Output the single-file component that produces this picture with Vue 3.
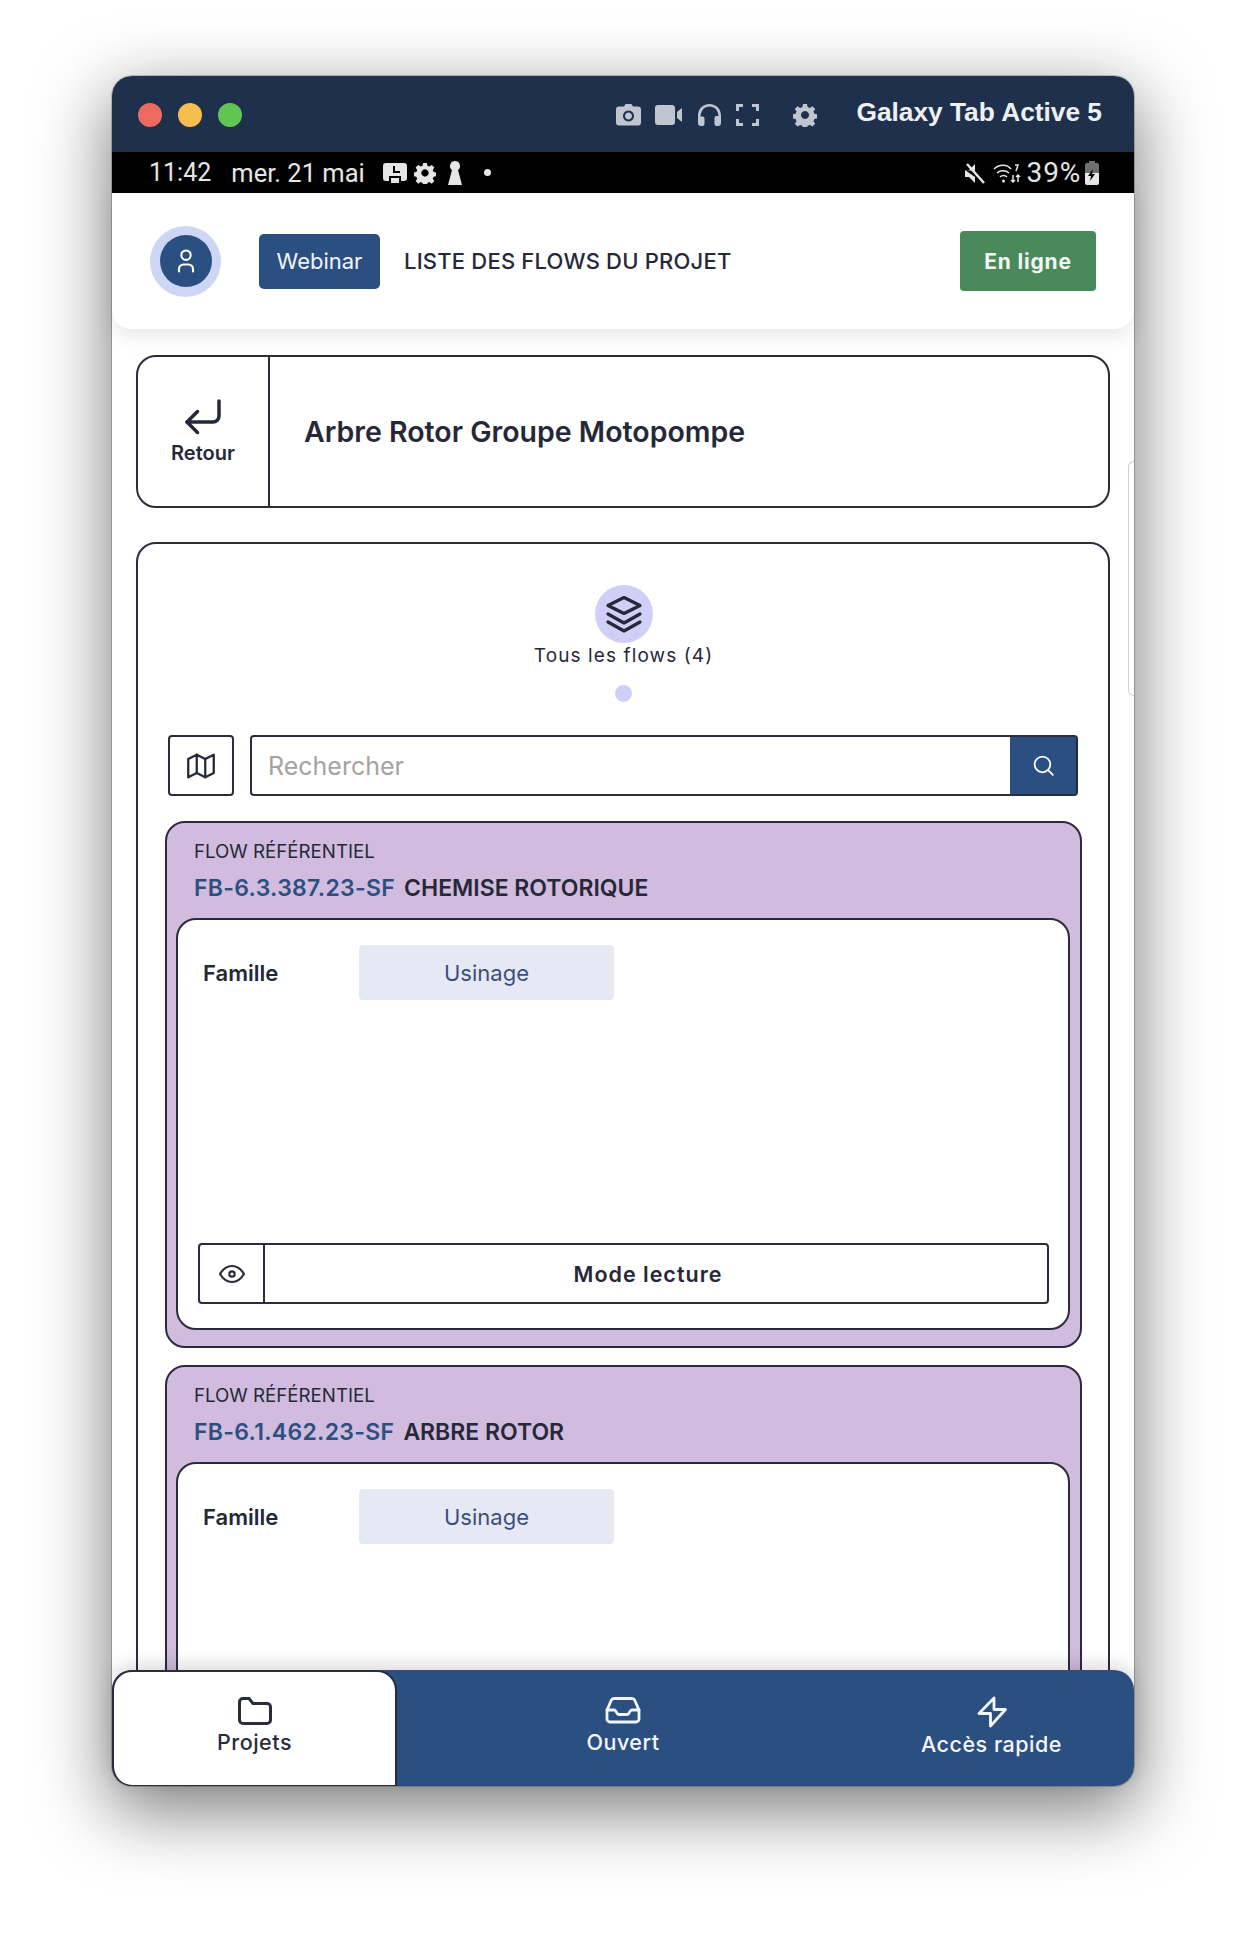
<template>
  <div class="page">
    <div class="window">
      <!-- barre de la fenêtre -->
      <div class="titlebar">
        <div class="lights">
          <span class="light red"></span>
          <span class="light yellow"></span>
          <span class="light green"></span>
        </div>
        <div class="tools">
          <svg class="tool" width="25" height="24" viewBox="0 0 25 24"><path fill-rule="evenodd" d="M8 3.500l1.500-2.500h6l1.500 2.500h5a3 3 0 0 1 3 3v13a3 3 0 0 1-3 3h-19a3 3 0 0 1-3-3v-13a3 3 0 0 1 3-3zM12.500 7.500a5.500 5.500 0 1 0 .001 0zM12.500 9.500a3.500 3.500 0 1 1-.001 0z" /></svg>
          <svg class="tool" width="28" height="22" viewBox="0 0 28 22"><rect x="0" y="1" width="20" height="20" rx="3" /><path d="M22 8l5-4v14l-5-4z" /></svg>
          <svg class="tool" width="25" height="24" viewBox="0 0 25 24"><path d="M12.500 1C5.800 1 1 6 1 12.500V20a3 3 0 0 0 3 3h1.500a2 2 0 0 0 2-2v-5.500a2 2 0 0 0-2-2H3.500C4 7 7.500 3.500 12.500 3.500S21 7 21.500 13h-2a2 2 0 0 0-2 2V21a2 2 0 0 0 2 2H21a3 3 0 0 0 3-3v-7.500C24 6 19.200 1 12.500 1z" /></svg>
          <svg class="tool-line" width="23" height="22" viewBox="0 0 23 22"><path d="M1.500 7V1.500H7M16 1.500h5.500V7M21.500 15v5.500H16M7 20.500H1.500V15" /></svg>
          <svg class="tool gear" width="24" height="24" viewBox="0 0 24 24"><path :d="gearPath" fill-rule="evenodd" /></svg>
        </div>
        <span class="device">Galaxy Tab Active 5</span>
      </div>

      <!-- barre d'état Android -->
      <div class="statusbar">
        <span class="st-time">11:42</span>
        <span class="st-date">mer. 21 mai</span>
        <svg class="st-ico st-first" width="24" height="22" viewBox="0 0 24 22"><path fill-rule="evenodd" d="M3 1h18a3 3 0 0 1 3 3v12a3 3 0 0 1-3 3h-3v-5H6v5H3a3 3 0 0 1-3-3V4a3 3 0 0 1 3-3zM10 4v7h7V9h-5V4zM8 16h8v5H8z" /></svg>
        <svg class="st-ico" width="22" height="22" viewBox="0 0 24 24"><path :d="gearPath" fill-rule="evenodd" /></svg>
        <svg class="st-ico st-key" width="14" height="24" viewBox="0 0 14 24"><path d="M7 0a5 5 0 0 1 3 9l4 15H0L4 9a5 5 0 0 1 3-9z" /></svg>
        <span class="st-dot"></span>
        <span class="st-spacer"></span>
        <svg class="st-ico" width="22" height="22" viewBox="0 0 22 22"><path d="M1 8h4l6-6v7zM1 8v7h4l6 6v-6z" /><path d="M3 2l17 19" stroke="#e6e6e6" stroke-width="2.500" /></svg>
        <svg class="st-wifi" width="28" height="22" viewBox="0 0 28 22"><path d="M1 7c5-5 13-5 17 0M4 11c3-3 9-3 12 0M7 15c2-2 5-2 7 0" /><circle cx="10.500" cy="19" r="1.500" fill="#e6e6e6" stroke="none" /><path d="M20 13v7M18 18l2 2 2-2M25 20v-7M23 15l2-2 2 2M22 3h3l-2 6" /></svg>
        <span class="st-pct">39%</span>
        <svg class="st-batt" width="14" height="24" viewBox="0 0 14 24"><path d="M4 0h6v2h2a2 2 0 0 1 2 2v8H0V4a2 2 0 0 1 2-2h2z" fill="#6f6f6f" /><path d="M0 12h14v10a2 2 0 0 1-2 2H2a2 2 0 0 1-2-2z" fill="#e6e6e6" /><path d="M8 8l-5 7h3l-1 5 5-7H7z" fill="#000" /></svg>
      </div>

      <!-- entête de l'app -->
      <header class="app-header">
        <div class="avatar">
          <div class="avatar-in">
            <svg width="28" height="28" viewBox="0 0 24 24" fill="none" stroke="#fff" stroke-width="1.800" stroke-linecap="round" stroke-linejoin="round"><path d="M8 7a4 4 0 1 0 8 0a4 4 0 0 0 -8 0" /><path d="M6 21v-2a4 4 0 0 1 4 -4h4a4 4 0 0 1 4 4v2" /></svg>
          </div>
        </div>
        <button class="webinar">Webinar</button>
        <span class="page-title">LISTE DES FLOWS DU PROJET</span>
        <button class="online">En ligne</button>
      </header>

      <main class="content">
        <section class="back-card">
          <div class="back-btn">
            <svg width="38" height="36" viewBox="0 0 38 36" fill="none" stroke="#262838" stroke-width="3.500" stroke-linecap="round" stroke-linejoin="round"><path d="M35 2v15a6 6 0 0 1-6 6H3" /><path d="M13.500 12.500L3 23l10.500 10.500" /></svg>
            <span>Retour</span>
          </div>
          <h1 class="project">Arbre Rotor Groupe Motopompe</h1>
        </section>

        <section class="main-card">
          <div class="tab-head">
            <div class="tab-ico">
              <svg width="40" height="38" viewBox="0 0 40 38" fill="none" stroke="#262838" stroke-width="3.200" stroke-linecap="round" stroke-linejoin="round"><path d="M20 2.500L36 10.500L20 18.500L4 10.500z" /><path d="M4 19l16 9l16-9" /><path d="M4 27l16 9l16-9" /></svg>
            </div>
            <span class="tab-label">Tous les flows (4)</span>
            <span class="tab-dot"></span>
          </div>

          <div class="search-row">
            <button class="map-btn">
              <svg width="34" height="34" viewBox="0 0 24 24" fill="none" stroke="#262838" stroke-width="1.600" stroke-linecap="round" stroke-linejoin="round"><path d="M3 7l6 -3l6 3l6 -3v13l-6 3l-6 -3l-6 3v-13" /><path d="M9 4v13" /><path d="M15 7v13" /></svg>
            </button>
            <div class="search">
              <span class="placeholder">Rechercher</span>
              <button class="search-btn">
                <svg width="25" height="25" viewBox="0 0 24 24" fill="none" stroke="#fff" stroke-width="1.700" stroke-linecap="round" stroke-linejoin="round"><path d="M3.500 11a7.500 7.500 0 1 0 15 0a7.500 7.500 0 0 0 -15 0" /><path d="M21 21l-4.600 -4.600" /></svg>
              </button>
            </div>
          </div>

          <article v-for="flow in flows" :key="flow.code" class="flow">
            <div class="flow-type">FLOW RÉFÉRENTIEL</div>
            <div class="flow-name"><span class="flow-code">{{ flow.code }}</span><span>{{ flow.name }}</span></div>
            <div class="flow-body">
              <div class="flow-row">
                <span class="row-label">Famille</span>
                <span class="chip">{{ flow.family }}</span>
              </div>
              <div class="read-mode">
                <span class="read-ico">
                  <svg width="32" height="32" viewBox="0 0 24 24" fill="none" stroke="#262838" stroke-width="1.600" stroke-linecap="round" stroke-linejoin="round"><path d="M10 12a2 2 0 1 0 4 0a2 2 0 0 0 -4 0" /><path d="M21 12c-2.400 4 -5.400 6 -9 6c-3.600 0 -6.600 -2 -9 -6c2.400 -4 5.400 -6 9 -6c3.600 0 6.600 2 9 6" /></svg>
                </span>
                <span class="read-txt">Mode lecture</span>
              </div>
            </div>
          </article>
        </section>

        <div class="scroll-edge"></div>
      </main>

      <nav class="bottom-nav">
        <a class="nav-item active">
          <svg width="36" height="30" viewBox="0 0 36 30" fill="none" stroke="currentColor" stroke-width="3" stroke-linecap="round" stroke-linejoin="round"><path d="M6 2.500h6l4 5h14a3.500 3.500 0 0 1 3.500 3.500v13a3.500 3.500 0 0 1-3.500 3.500H6A3.500 3.500 0 0 1 2.500 24V6A3.500 3.500 0 0 1 6 2.500z" /></svg>
          <span>Projets</span>
        </a>
        <a class="nav-item">
          <svg width="36" height="30" viewBox="0 0 36 30" fill="none" stroke="currentColor" stroke-width="2.800" stroke-linecap="round" stroke-linejoin="round"><path d="M9 2.500h18a3 3 0 0 1 2.700 1.700L34 14v9a3 3 0 0 1-3 3H5a3 3 0 0 1-3-3v-9l4.300-9.800A3 3 0 0 1 9 2.500z" /><path d="M2 14h7a2 2 0 0 1 1.700 1l1.600 2.500a2 2 0 0 0 1.700 1h8a2 2 0 0 0 1.700-1l1.600-2.500a2 2 0 0 1 1.700-1h7" /></svg>
          <span>Ouvert</span>
        </a>
        <a class="nav-item">
          <svg width="30" height="32" viewBox="0 0 30 32" fill="none" stroke="currentColor" stroke-width="2.800" stroke-linecap="round" stroke-linejoin="round"><path d="M17 2L2 17.500h11.500V30L28.500 13.500H17z" /></svg>
          <span>Accès rapide</span>
        </a>
      </nav>
    </div>
  </div>
</template>

<script setup>
// roue dentée partagée entre la barre de fenêtre et la barre d'état
const gearPath =
  'M10 1h4l.6 3 2.200.9 2.600-1.700 2.800 2.800-1.700 2.600.9 2.200 3 .6v4l-3 .6-.9 2.200 1.700 2.600-2.800 2.800-2.600-1.700-2.200.9-.6 3h-4l-.6-3-2.200-.9-2.600 1.700-2.800-2.800 1.700-2.600-.9-2.200-3-.6v-4l3-.6.9-2.200-1.700-2.600 2.800-2.800 2.600 1.700 2.200-.9zM12 8a4 4 0 1 0 .001 0z'

const flows = [
  { code: 'FB-6.3.387.23-SF', name: 'CHEMISE ROTORIQUE', family: 'Usinage' },
  { code: 'FB-6.1.462.23-SF', name: 'ARBRE ROTOR', family: 'Usinage' },
]
</script>

<style>
html, body { margin: 0; background: #fff; }
</style>

<style scoped>
* { box-sizing: border-box; }
.page {
  width: 1246px;
  height: 1934px;
  padding: 76px 112px 0;
  font-family: Inter, "Noto Sans", sans-serif;
  color: #262838;
  overflow: hidden;
}
.window {
  width: 1022px;
  height: 1710px;
  display: flex;
  flex-direction: column;
  border-radius: 20px;
  background: #fff;
  box-shadow: 0 22px 70px 4px rgba(0, 0, 0, 0.5), 0 0 0 1px rgba(0, 0, 0, 0.2);
}

/* barre de fenêtre */
.titlebar {
  flex: none;
  height: 76px;
  display: flex;
  align-items: center;
  padding: 0 32px 0 26px;
  background: #1f304d;
  border-radius: 20px 20px 0 0;
}
.lights { display: flex; gap: 16px; margin-top: 2px; }
.light { width: 24px; height: 24px; border-radius: 50%; }
.red { background: #ec6a5e; }
.yellow { background: #f4bf4f; }
.green { background: #61c554; }
.tools { display: flex; align-items: center; margin-left: 374px; margin-top: 2px; }
.tools svg { margin-right: 14px; }
.tool { fill: #bfc6d0; }
.tool-line { fill: none; stroke: #bfc6d0; stroke-width: 3; }
.tools .gear { margin-left: 20px; margin-right: 0; }
.device {
  margin-left: auto;
  font-family: "Liberation Sans", Arial, sans-serif;
  font-weight: 700;
  font-size: 26.300px;
  color: #eef0f4;
  margin-top: -4px;
}

/* barre d'état */
.statusbar {
  flex: none;
  height: 41px;
  display: flex;
  align-items: center;
  padding: 0 35px 0 37px;
  background: #000;
  color: #e6e6e6;
  font-family: Roboto, sans-serif;
  font-size: 25px;
}
.st-date { margin-left: 20px; font-size: 25.500px; }
.st-ico { fill: #e6e6e6; margin-left: 7px; }
.st-first { margin-left: 18px; }
.st-key { margin-left: 12px; }
.st-dot { width: 7px; height: 7px; border-radius: 50%; background: #e6e6e6; margin-left: 22px; }
.st-spacer { flex: 1; }
.st-wifi { fill: none; stroke: #e6e6e6; stroke-width: 1.500; margin-left: 7px; }
.st-pct { margin-left: 6px; font-size: 28px; letter-spacing: 0.8px; }
.st-batt { margin-left: 4px; }

/* entête */
.app-header {
  flex: none;
  position: relative;
  z-index: 2;
  height: 136px;
  display: flex;
  align-items: center;
  padding: 0 38px;
  background: #fff;
  border-radius: 0 0 20px 20px;
  box-shadow: 0 6px 22px rgba(0, 0, 0, 0.1);
}
.avatar {
  width: 71px;
  height: 71px;
  border-radius: 50%;
  background: #cdd6f4;
  display: flex;
  align-items: center;
  justify-content: center;
}
.avatar-in {
  width: 52px;
  height: 52px;
  border-radius: 50%;
  background: #2c4f82;
  display: flex;
  align-items: center;
  justify-content: center;
}
.webinar {
  width: 121px;
  height: 55px;
  margin-left: 38px;
  border: none;
  border-radius: 5px;
  background: #2c4f82;
  color: #f1f4fa;
  font: 400 22px Inter, sans-serif;
}
.page-title { margin-left: 24px; font-size: 22px; font-weight: 500; letter-spacing: 0.2px; }
.online {
  width: 136px;
  height: 60px;
  margin-left: auto;
  border: none;
  border-radius: 4px;
  background: #4a8a5a;
  color: #f3f7f4;
  font: 700 21px Inter, sans-serif;
  letter-spacing: 0.8px;
}

/* contenu */
.content {
  flex: 1;
  min-height: 0;
  position: relative;
  overflow: hidden;
  padding: 26px 24px 0 24px;
}
.back-card {
  height: 153px;
  display: flex;
  align-items: stretch;
  border: 2px solid #2a2c3c;
  border-radius: 20px;
}
.back-btn {
  width: 132px;
  flex: none;
  border-right: 2px solid #2a2c3c;
  display: flex;
  flex-direction: column;
  align-items: center;
  justify-content: center;
  font-size: 20px;
  font-weight: 600;
  gap: 6px;
}
.project { margin: 0 0 0 34px; align-self: center; font-size: 28.500px; font-weight: 600; }
.main-card {
  margin-top: 34px;
  height: 1400px;
  padding: 41px 26px 0 27px;
  border: 2px solid #2a2c3c;
  border-radius: 20px;
}
.tab-head { display: flex; flex-direction: column; align-items: center; }
.tab-ico {
  width: 58px;
  height: 58px;
  border-radius: 50%;
  background: #cfcff8;
  display: flex;
  align-items: center;
  justify-content: center;
}
.tab-label { margin-top: 1px; font-size: 19px; line-height: 24px; letter-spacing: 1.100px; }
.tab-dot { width: 17px; height: 17px; margin-top: 17px; border-radius: 50%; background: #cfcff8; }
.search-row { display: flex; gap: 16px; margin: 33px 4px 0 3px; height: 61px; }
.map-btn {
  width: 66px;
  flex: none;
  border: 2px solid #2a2c3c;
  border-radius: 4px;
  background: #fff;
  display: flex;
  align-items: center;
  justify-content: center;
  padding: 0;
}
.search {
  flex: 1;
  display: flex;
  align-items: center;
  border: 2px solid #2a2c3c;
  border-radius: 4px;
}
.placeholder { flex: 1; padding-left: 16px; font-size: 25px; color: #a3a3a3; }
.search-btn {
  width: 66px;
  height: 100%;
  border: none;
  background: #2c4f82;
  display: flex;
  align-items: center;
  justify-content: center;
  padding: 0;
}
.flow {
  margin-top: 25px;
  height: 527px;
  padding: 0 10px 16px 9px;
  display: flex;
  flex-direction: column;
  background: #d1bcdf;
  border: 2px solid #2a2c3c;
  border-radius: 20px;
}
.flow + .flow { margin-top: 17px; }
.flow-type { margin: 16px 0 0 18px; font-size: 18.700px; line-height: 26px; }
.flow-name {
  display: flex;
  gap: 9px;
  margin: 8px 0 15px 18px;
  font-size: 23px;
  line-height: 30px;
  font-weight: 600;
}
.flow-code { color: #2c4f7f; letter-spacing: 0.300px; }
.flow-body {
  flex: 1;
  padding: 25px 19px 24px 20px;
  display: flex;
  flex-direction: column;
  justify-content: space-between;
  background: #fff;
  border: 2px solid #2a2c3c;
  border-radius: 20px;
}
.flow-row { display: flex; align-items: center; }
.row-label { width: 161px; padding-left: 5px; font-size: 22px; font-weight: 600; }
.chip {
  width: 255px;
  height: 55px;
  display: flex;
  align-items: center;
  justify-content: center;
  background: #e6e8f3;
  border-radius: 4px;
  color: #3a5080;
  font-size: 22px;
}
.read-mode {
  height: 61px;
  display: flex;
  align-items: stretch;
  border: 2px solid #2a2c3c;
  border-radius: 4px;
}
.read-ico {
  width: 65px;
  flex: none;
  display: flex;
  align-items: center;
  justify-content: center;
  border-right: 2px solid #2a2c3c;
}
.read-txt {
  flex: 1;
  display: flex;
  align-items: center;
  justify-content: center;
  padding-right: 16px;
  font-size: 21.500px;
  font-weight: 600;
  letter-spacing: 1px;
}
.scroll-edge {
  position: absolute;
  right: 0;
  top: 132px;
  width: 6px;
  height: 235px;
  border: 1px solid #cfcfcf;
  border-right: none;
  border-radius: 6px 0 0 6px;
}

/* navigation du bas */
.bottom-nav {
  flex: none;
  position: relative;
  z-index: 2;
  height: 116px;
  display: grid;
  grid-template-columns: 285px 1fr 285px;
  background: #2c4f82;
  border-radius: 20px;
  box-shadow: 0 -6px 18px rgba(0, 0, 0, 0.14);
}
.nav-item {
  display: flex;
  flex-direction: column;
  align-items: center;
  padding-top: 26px;
  color: #f4f6fa;
  font-size: 21.500px;
  font-weight: 500;
  letter-spacing: 0.5px;
}
.nav-item span { margin-top: 2px; line-height: 28px; }
.nav-item.active {
  padding-top: 24px;
  background: #fff;
  color: #2a2c3c;
  border: 2px solid #2a2c3c;
  border-bottom-width: 1px;
  border-radius: 20px 20px 0 20px;
}
</style>
